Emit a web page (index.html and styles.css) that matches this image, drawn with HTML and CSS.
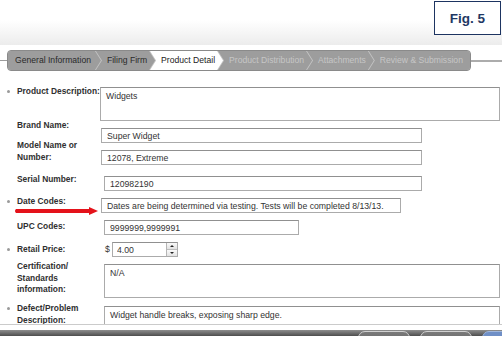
FILE: index.html
```html
<!DOCTYPE html>
<html lang="en">
<head>
  <meta charset="UTF-8" />
  <meta name="viewport" content="width=device-width, initial-scale=1.0"/>
  <title>Product Detail</title>
  <link rel="stylesheet" href="styles.css">
</head>
<body>
<div class="page">
  <div class="header">
    <div class="fig">Fig. 5</div>
  </div>

  <div class="steps">
    <div class="steps-line"></div>
    <div class="steps-bar">
      <div class="step first done">General Information</div>
      <div class="step done">Filing Firm</div>
      <div class="step active">Product Detail</div>
      <div class="step">Product Distribution</div>
      <div class="step">Attachments</div>
      <div class="step last">Review &amp; Submission</div>
    </div>
    <div class="steps-line wide"></div>
  </div>

  <div class="form">
    <div class="row r-desc">
      <span class="mark req"></span>
      <label>Product Description:</label>
      <textarea class="field area w-full" readonly>Widgets</textarea>
    </div>
    <div class="row r-brand">
      <span class="mark"></span>
      <label>Brand Name:</label>
      <input class="field w-lg" type="text" value="Super Widget" readonly>
    </div>
    <div class="row r-model">
      <span class="mark"></span>
      <label>Model Name or<br>Number:</label>
      <input class="field w-lg" type="text" value="12078, Extreme" readonly>
    </div>
    <div class="row r-serial">
      <span class="mark"></span>
      <label>Serial Number:</label>
      <input class="field w-serial" type="text" value="120982190" readonly>
    </div>
    <div class="row r-date">
      <span class="mark req"></span>
      <label>Date Codes:</label>
      <input class="field w-date" type="text" value="Dates are being determined via testing. Tests will be completed 8/13/13." readonly>
    </div>
    <div class="row r-upc">
      <span class="mark"></span>
      <label>UPC Codes:</label>
      <input class="field w-upc" type="text" value="9999999,9999991" readonly>
    </div>
    <div class="row r-price">
      <span class="mark req"></span>
      <label>Retail Price:</label>
      <span class="cur">$</span>
      <div class="spin">
        <input class="spin-input" type="text" value="4.00" readonly>
        <span class="spin-btns">
          <span class="up"></span>
          <span class="down"></span>
        </span>
      </div>
    </div>
    <div class="row r-cert">
      <span class="mark"></span>
      <label>Certification/<br>Standards<br>information:</label>
      <textarea class="field area w-wide" readonly>N/A</textarea>
    </div>
    <div class="row r-defect">
      <span class="mark req"></span>
      <label>Defect/Problem<br>Description:</label>
      <textarea class="field area tall w-wide" readonly>Widget handle breaks, exposing sharp edge.</textarea>
    </div>

    <!-- annotation arrow pointing at Date Codes -->
    <svg class="arrow" width="86" height="10" viewBox="0 0 86 10">
      <path d="M2 3 L75 3 L75 1 L84 5 L75 9 L75 7 L2 7 Q0 5 2 3 Z" fill="#e4121a"/>
    </svg>
  </div>

  <div class="gap"></div>

  <div class="footer">
    <span class="btn"></span>
    <span class="btn"></span>
    <span class="btn blue"></span>
  </div>
</div>
</body>
</html>
```

FILE: styles.css
```css
html, body {
  margin: 0;
  padding: 0;
  background: #fff;
  font-family: "Liberation Sans", Arial, sans-serif;
}

.page {
  width: 502px;
  height: 337px;
  overflow: hidden;
}

/* Header with figure tag */
.header {
  height: 45px;
  display: flex;
  justify-content: flex-end;
  align-items: flex-start;
  background: linear-gradient(to bottom, #fff 45%, #ececec 100%);
}

.fig {
  box-sizing: border-box;
  width: 67px;
  height: 34px;
  margin: 1px 1px 0 0;
  border: 1px solid #1d3461;
  background: #fff;
  color: #1f3864;
  font-weight: bold;
  font-size: 13.5px;
  display: flex;
  align-items: center;
  justify-content: center;
}

/* Wizard steps */
.steps {
  margin-top: 5px;
  height: 21px;
  display: flex;
  align-items: center;
}

.steps-line {
  flex: 0 0 7px;
  height: 1px;
  background: #9c9c9c;
}

.steps-line.wide {
  flex: 1;
  height: 2px;
  background: #acacac;
}

.steps-bar {
  box-sizing: border-box;
  width: 464px;
  height: 21px;
  display: flex;
  border: 1px solid #8a8a8a;
  border-radius: 4px;
  background: #c4c4c4;
  overflow: hidden;
}

.step {
  margin-left: -5px;
  padding: 0 8px 0 11px;
  line-height: 19px;
  font-size: 8.6px;
  white-space: nowrap;
  background: #9d9d9d;
  color: #c6c6c6;
  clip-path: polygon(0 0, calc(100% - 6px) 0, 100% 50%, calc(100% - 6px) 100%, 0 100%, 6px 50%);
}

.step.first {
  margin-left: 0;
  padding-left: 7px;
  padding-right: 10px;
  clip-path: polygon(0 0, calc(100% - 6px) 0, 100% 50%, calc(100% - 6px) 100%, 0 100%);
}

.step.last {
  flex: 1;
  clip-path: polygon(0 0, 100% 0, 100% 100%, 0 100%, 6px 50%);
}

.step.done { color: #2a2a2a; }

.step.active {
  background: #fff;
  color: #222;
}

/* Form */
.form {
  position: relative;
  height: 254px;
  padding-top: 15px;
  box-sizing: border-box;
  border-bottom: 1px solid #cbcbcb;
  overflow: hidden;
}

.row {
  display: flex;
  align-items: flex-start;
}

.mark {
  flex: 0 0 17px;
  height: 11px;
}

.mark.req::before {
  content: "";
  display: block;
  width: 3px;
  height: 3px;
  margin: 4px 0 0 7px;
  border-radius: 50%;
  background: #9a9a9a;
}

.row label {
  flex: 0 0 83px;
  font-size: 8.4px;
  font-weight: bold;
  line-height: 11.5px;
  color: #303030;
  white-space: nowrap;
}

.field {
  box-sizing: border-box;
  height: 15px;
  margin: 0;
  padding: 0 5px;
  border: 1px solid #ababab;
  border-top-color: #909090;
  background: #fff;
  color: #333;
  font-family: "Liberation Sans", Arial, sans-serif;
  font-size: 8.7px;
  outline: none;
}

.area {
  height: 34px;
  padding: 3px 5px;
  line-height: 11px;
  resize: none;
  overflow: hidden;
}

.area.tall { height: 60px; }

.w-full   { width: 400px; }
.w-lg     { width: 321px; margin-left: 1px; }
.w-serial { width: 318px; margin-left: 4px; }
.w-date   { width: 300px; margin-left: 1px; }
.w-upc    { width: 195px; margin-left: 4px; }
.w-wide   { width: 396px; margin-left: 4px; }

/* vertical rhythm of the rows */
.r-desc .field   { margin-top: 1px; }
.r-brand         { margin-top: -1px; }
.r-brand .field  { margin-top: 8px; }
.r-model         { margin-top: -3px; }
.r-model .field  { margin-top: 10px; }
.r-serial        { margin-top: 9px; }
.r-serial .field { margin-top: 2px; }
.r-date          { margin-top: 5px; }
.r-date .field   { margin-top: 2px; }
.r-upc           { margin-top: 7px; }
.r-upc label     { margin-top: 1px; }
.r-price         { margin-top: 7px; }
.r-price label   { margin-top: 2px; }
.r-price .mark   { margin-top: 2px; }
.r-cert          { margin-top: 4px; }
.r-cert .field   { margin-top: 3px; }
.r-defect        { margin-top: 5px; }
.r-defect .field { margin-top: 3px; }

.cur {
  box-sizing: border-box;
  flex: 0 0 12px;
  padding-left: 5px;
  line-height: 15px;
  font-size: 8.7px;
  color: #333;
}

.spin {
  box-sizing: border-box;
  width: 66px;
  height: 15px;
  display: flex;
  border: 1px solid #ababab;
  border-top-color: #909090;
}

.spin-input {
  flex: 1;
  min-width: 0;
  border: none;
  padding: 0 4px;
  margin: 0;
  font-family: "Liberation Sans", Arial, sans-serif;
  font-size: 8.7px;
  color: #333;
  outline: none;
}

.spin-btns {
  flex: 0 0 10px;
  display: flex;
  flex-direction: column;
  border-left: 1px solid #b5b5b5;
}

.spin-btns span {
  flex: 1;
  display: flex;
  align-items: center;
  justify-content: center;
  background: linear-gradient(#fafafa, #e2e2e2);
}

.spin-btns .up { border-bottom: 1px solid #bdbdbd; }

.spin-btns .up::before,
.spin-btns .down::before {
  content: "";
  border-left: 2px solid transparent;
  border-right: 2px solid transparent;
}

.spin-btns .up::before { border-bottom: 2px solid #222; }
.spin-btns .down::before { border-top: 2px solid #222; }

.arrow {
  position: absolute;
  left: 14px;
  top: 135px;
}

.gap { height: 5px; }

/* bottom button bar, mostly scrolled out of view */
.footer {
  height: 6px;
  display: flex;
  justify-content: flex-end;
  gap: 10px;
  padding-top: 1px;
  box-sizing: border-box;
  overflow: hidden;
  background: linear-gradient(to bottom, #8e8e8e, #4e4e4e);
}

.btn {
  flex: 0 0 52px;
  height: 20px;
  box-sizing: border-box;
  border: 1px solid #d0d0d0;
  border-radius: 7px;
  background: linear-gradient(#7a7a7a, #5a5a5a);
}

.btn.blue {
  flex-basis: 40px;
  margin-right: -20px;
  border-color: #9fb6db;
  background: #6f8fc6;
}
```
